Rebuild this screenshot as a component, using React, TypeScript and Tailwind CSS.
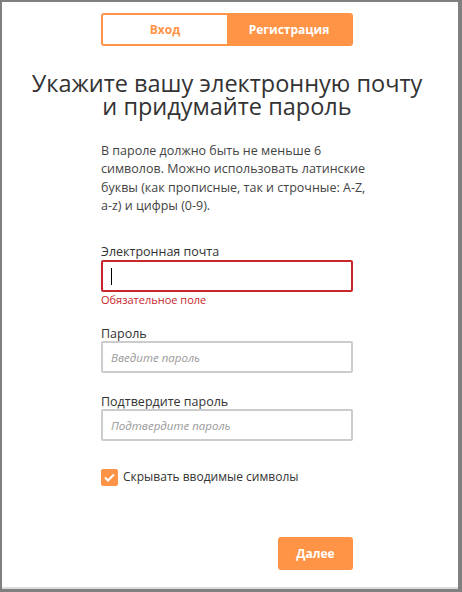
import React, { useState } from 'react';

const font = { fontFamily: '"Open Sans", "Noto Sans", sans-serif' };

export default function App() {
    const [tab, setTab] = useState<'login' | 'register'>('register');
    const [hide, setHide] = useState(true);

    return (
        <div className="w-[462px] h-[592px] bg-[#808080] pt-[2px] pl-[2px] pr-[4px] pb-[3px]" style={font}>
            <div className="h-full bg-white border-b-[2px] border-[#dcdcdc] flex flex-col">
                <div className="w-[252px] ml-[99px] flex flex-col">
                    {/* Tabs */}
                    <div className="mt-[11px] h-[33px] flex border-2 border-[#ff9447] rounded-[3px] overflow-hidden">
                        <button
                            onClick={() => setTab('login')}
                            className={`w-1/2 text-[12px] font-bold ${tab === 'login' ? 'bg-[#ff9447] text-white' : 'bg-white text-[#ff9447]'}`}
                        >
                            Вход
                        </button>
                        <button
                            onClick={() => setTab('register')}
                            className={`w-1/2 text-[12px] font-bold ${tab === 'register' ? 'bg-[#ff9447] text-white' : 'bg-white text-[#ff9447]'}`}
                        >
                            Регистрация
                        </button>
                    </div>

                    {/* Title */}
                    <h1 className="-mx-[100px] mt-[26px] text-center text-[23.5px] leading-[23px] text-[#333333] font-normal">
                        Укажите вашу электронную почту
                        <br />
                        и придумайте пароль
                    </h1>

                    <p className="mt-[24px] -mr-[16px] text-[12.5px] leading-[18.3px] text-[#444444]">
                        В пароле должно быть не меньше 6 символов. Можно использовать латинские буквы (как прописные, так и строчные:{' '}
                        <span className="whitespace-nowrap">A-Z,</span> <span className="whitespace-nowrap">a-z)</span> и цифры (0-9).
                    </p>

                    {/* Email */}
                    <label className="mt-[29px] block text-[12.5px] leading-[16px] text-[#333333]">Электронная почта</label>
                    <div className="h-[32px] border-2 border-[#c8262b] rounded-[2px] flex items-center px-[8px]">
                        <span className="w-[1px] h-[17px] bg-black" />
                    </div>
                    <div className="text-[11px] leading-[16px] text-[#c8262b]">Обязательное поле</div>

                    {/* Password */}
                    <label className="mt-[18px] block text-[12.5px] leading-[15px] text-[#333333]">Пароль</label>
                    <input
                        type="password"
                        placeholder="Введите пароль"
                        className="h-[32px] border-2 border-[#cccccc] rounded-[2px] px-[8px] text-[11.5px] italic outline-none placeholder:text-[#999999]"
                    />

                    <label className="mt-[21px] block text-[12.5px] leading-[15px] text-[#333333]">Подтвердите пароль</label>
                    <input
                        type="password"
                        placeholder="Подтвердите пароль"
                        className="h-[32px] border-2 border-[#cccccc] rounded-[2px] px-[8px] text-[11.5px] italic outline-none placeholder:text-[#999999]"
                    />

                    {/* Checkbox */}
                    <label className="mt-[27px] flex items-center gap-[5px] cursor-pointer" onClick={() => setHide(!hide)}>
                        <span className={`w-[17px] h-[17px] rounded-[2px] flex items-center justify-center ${hide ? 'bg-[#ff9447]' : 'border-2 border-[#cccccc] bg-white'}`}>
                            {hide && (
                                <svg width="11" height="9" viewBox="0 0 11 9" fill="none">
                                    <path d="M1 4.5 L4 7.5 L10 1.5" stroke="white" strokeWidth="2" />
                                </svg>
                            )}
                        </span>
                        <span className="text-[12px] text-[#333333]">Скрывать вводимые символы</span>
                    </label>

                    <div className="mt-[51px] flex justify-end">
                        <button className="w-[75px] h-[33px] bg-[#ff9447] rounded-[3px] text-white text-[12px] font-bold">
                            Далее
                        </button>
                    </div>
                </div>
            </div>
        </div>
    );
}
